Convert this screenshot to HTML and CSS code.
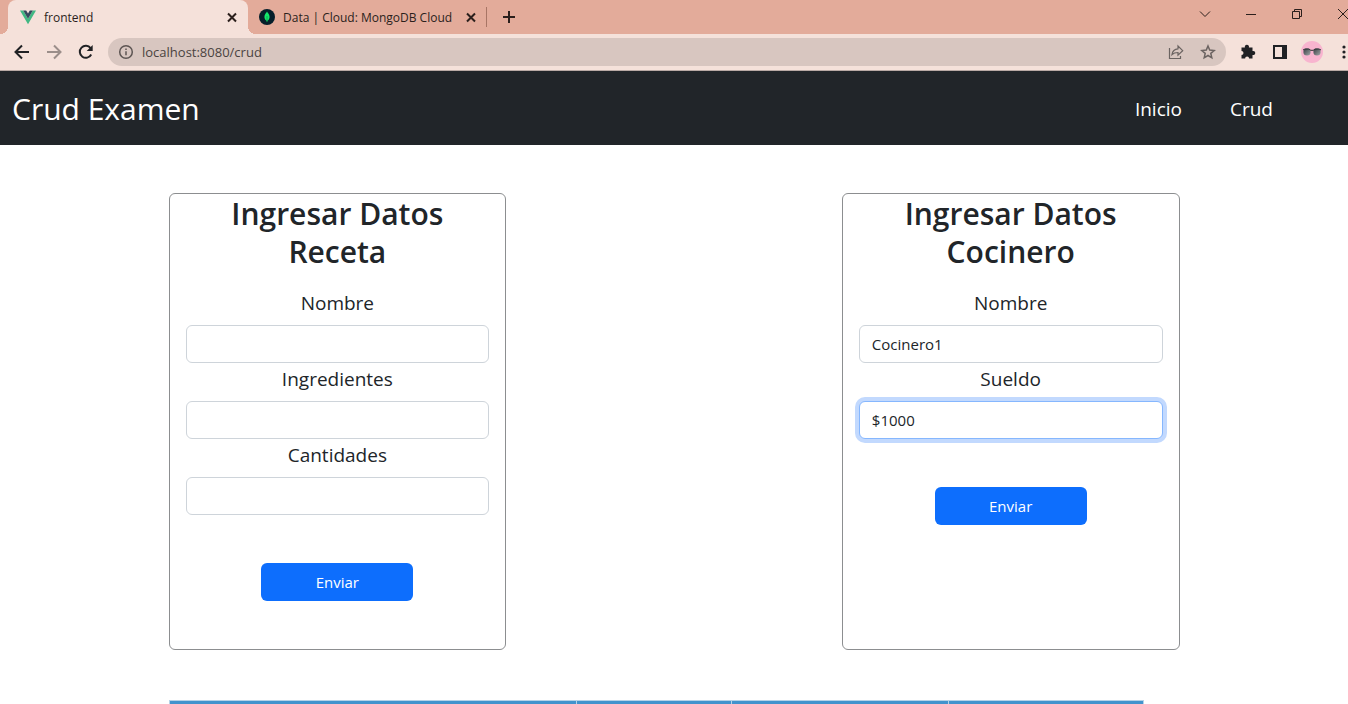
FILE: index.html
```html
<!DOCTYPE html>
<html lang="es">
<head>
<meta charset="utf-8">
<meta name="viewport" content="width=device-width, initial-scale=1">
<title>frontend</title>
<link rel="stylesheet" href="styles.css">
</head>
<body>
<div class="browser">
  <header class="tab-strip">
    <div class="tab tab-active">
      <svg class="favicon" viewBox="0 0 16 16"><path fill="#41b883" d="M0 1.5h3.2L8 9.7l4.8-8.2H16L8 15.2z"/><path fill="#35495e" d="M3.2 1.5h3L8 4.6l1.8-3.1h3L8 9.7z"/></svg>
      <span class="tab-title">frontend</span>
      <button class="tab-close" aria-label="Cerrar frontend"><svg viewBox="0 0 16 16"><path d="M4 4.5l8 8M12 4.5l-8 8"/></svg></button>
    </div>
    <div class="tab tab-idle">
      <svg class="favicon" viewBox="0 0 16 16"><circle cx="8" cy="8" r="8" fill="#061e2a"/><path fill="#13e66b" d="M8 2.6c.8 1.6 2.6 2.8 2.6 5.5 0 2-1.2 3.2-2.3 4L8 13.6l-.3-1.5c-1.1-.8-2.3-2-2.3-4C5.4 5.4 7.2 4.2 8 2.6z"/><path stroke="#0a8f48" stroke-width=".7" d="M8 7v6"/></svg>
      <span class="tab-title">Data | Cloud: MongoDB Cloud</span>
      <button class="tab-close" aria-label="Cerrar MongoDB"><svg viewBox="0 0 16 16"><path d="M4 4.5l8 8M12 4.5l-8 8"/></svg></button>
    </div>
    <button class="new-tab" aria-label="Nueva pestaña"><svg viewBox="0 0 16 16"><path d="M8 2v12M2 8h12"/></svg></button>
    <div class="window-controls">
      <button aria-label="Buscar pestañas"><svg viewBox="0 0 16 16"><path d="M3 5.5l5 5 5-5"/></svg></button>
      <button aria-label="Minimizar"><svg viewBox="0 0 16 16"><path d="M3 8.5h10"/></svg></button>
      <button aria-label="Restaurar"><svg viewBox="0 0 16 16"><path d="M3.5 5.5h7v7h-7zM5.5 5.5v-2h7v7h-2"/></svg></button>
      <button aria-label="Cerrar"><svg viewBox="0 0 16 16"><path d="M3 3l10 10M13 3L3 13"/></svg></button>
    </div>
  </header>

  <div class="toolbar">
    <button class="tool" aria-label="Atrás"><svg viewBox="0 0 16 16"><path d="M15 8H2M8 1.500L1.500 8 8 14.500"/></svg></button>
    <button class="tool tool-off" aria-label="Adelante"><svg viewBox="0 0 16 16"><path d="M1 8h13M8 1.500L14.500 8 8 14.500"/></svg></button>
    <button class="tool" aria-label="Recargar"><svg viewBox="0 0 16 16"><path d="M13.200 10.500A6 6 0 1 1 12.600 4.200"/><path class="solid" d="M14.700 1v6H8.700z"/></svg></button>
    <div class="omnibox">
      <svg class="info" viewBox="0 0 16 16"><circle cx="8" cy="8" r="6.300"/><path d="M8 7.200v4.100M8 4.400v1.500"/></svg>
      <input class="address" type="text" aria-label="Dirección" value="localhost:8080/crud">
      <button class="tool tool-soft" aria-label="Compartir"><svg viewBox="0 0 16 16"><path d="M1.500 4v10.500h11V12M4 10.500c.5-3.500 2.500-5.500 6-5.700V2l4.700 4.700L10 11.200V8.500c-2.700 0-4.500.5-6 2z"/></svg></button>
      <button class="tool tool-soft tool-star" aria-label="Favorito"><svg viewBox="0 0 16 16"><path d="M8 2l1.700 4.100 4.500.4-3.400 2.900 1 4.400L8 11.500l-3.800 2.300 1-4.400-3.400-2.900 4.500-.4z"/></svg></button>
    </div>
    <button class="tool" aria-label="Extensiones"><svg viewBox="0 0 16 16"><path class="solid" d="M1.500 3.500h3.400a2.100 2.100 0 1 1 4 0h3.600V7a2.100 2.100 0 1 1 0 4v3.500H9.100a2 2 0 0 0-4 0H1.500v-3.600a2 2 0 0 0 0-4z"/></svg></button>
    <button class="tool" aria-label="Panel lateral"><svg viewBox="0 0 16 16"><path d="M2 2h12v12H2z"/><path class="solid" d="M10 2h4v12h-4z"/></svg></button>
    <button class="tool" aria-label="Perfil"><svg class="avatar" viewBox="0 0 22 22"><defs><linearGradient id="lens" x2="1" y2="1"><stop stop-color="#333b3f"/><stop offset="1" stop-color="#a5a8aa"/></linearGradient></defs><circle class="face" cx="11" cy="11" r="11"/><circle class="lens" cx="6" cy="11" r="3.600"/><circle class="lens" cx="16" cy="11" r="3.600"/><path class="frame" d="M2 9l2-1h4l2 1.500q1-.8 2 0L14 8h4l2 1"/></svg></button>
    <button class="tool" aria-label="Menú"><svg viewBox="0 0 16 16"><circle class="solid" cx="8" cy="3" r="1.600"/><circle class="solid" cx="8" cy="8" r="1.600"/><circle class="solid" cx="8" cy="13" r="1.600"/></svg></button>
  </div>

  <div class="page">
    <nav class="navbar">
      <a class="brand" href="#">Crud Examen</a>
      <div class="nav-links">
        <a href="#">Inicio</a>
        <a href="#">Crud</a>
      </div>
    </nav>
    <main class="content">
      <div class="cards">
        <form class="card">
          <h2>Ingresar Datos Receta</h2>
          <label for="receta-nombre">Nombre</label>
          <input class="field" id="receta-nombre" type="text">
          <label for="receta-ingredientes">Ingredientes</label>
          <input class="field" id="receta-ingredientes" type="text">
          <label for="receta-cantidades">Cantidades</label>
          <input class="field" id="receta-cantidades" type="text">
          <button class="submit" type="button">Enviar</button>
        </form>
        <form class="card">
          <h2>Ingresar Datos Cocinero</h2>
          <label for="cocinero-nombre">Nombre</label>
          <input class="field" id="cocinero-nombre" type="text" value="Cocinero1">
          <label for="cocinero-sueldo">Sueldo</label>
          <input class="field field-focus" id="cocinero-sueldo" type="text" value="$1000">
          <button class="submit" type="button">Enviar</button>
        </form>
      </div>
      <table class="records">
        <colgroup><col class="col-a"><col class="col-b"><col class="col-c"><col class="col-d"></colgroup>
        <thead><tr><th></th><th></th><th></th><th></th></tr></thead>
      </table>
    </main>
  </div>
</div>
</body>
</html>
```

FILE: styles.css
```css
* { box-sizing: border-box; }

body {
  margin: 0;
  font-family: "Open Sans", "Noto Sans", sans-serif;
  color: #212529;
  background: #fff;
}

button {
  padding: 0;
  border: 0;
  background: none;
  color: inherit;
  font: inherit;
}

svg {
  display: block;
  width: 16px;
  height: 16px;
  fill: none;
  stroke: none;
}

button svg { stroke: currentColor; }

.browser {
  display: flex;
  flex-direction: column;
  height: 100vh;
  overflow: hidden;
}

/* Tabs */
.tab-strip {
  display: flex;
  flex: none;
  height: 34px;
  padding-left: 8px;
  background: #e3ab9a;
  color: #2b1f1c;
  font-size: 12px;
}

.tab {
  display: flex;
  align-items: center;
  gap: 8px;
  width: 240px;
  padding: 0 8px 0 12px;
}

.tab-active {
  position: relative;
  border-radius: 8px 8px 0 0;
  background: #f5e1da;
}

.tab-active::before,
.tab-active::after {
  content: "";
  position: absolute;
  bottom: 0;
  width: 8px;
  height: 8px;
}

.tab-active::before {
  right: 100%;
  background: radial-gradient(circle at 0 0, transparent 8px, #f5e1da 8px);
}

.tab-active::after {
  left: 100%;
  background: radial-gradient(circle at 100% 0, transparent 8px, #f5e1da 8px);
}

.tab-idle {
  width: 238px;
  padding: 0 7px 0 11px;
}

.tab-title {
  flex: 1;
  white-space: nowrap;
}

.tab-close svg { stroke-width: 2; }

.new-tab {
  padding: 0 14px;
  border-left: 1px solid #a87565;
  align-self: center;
  height: 20px;
}

.new-tab svg { stroke-width: 2; }

.window-controls {
  display: flex;
  margin: 0 -18px 0 auto;
  padding-bottom: 6px;
}

.window-controls button {
  display: grid;
  place-items: center;
  width: 46px;
}

/* Toolbar */
.toolbar {
  display: flex;
  flex: none;
  align-items: center;
  height: 37px;
  margin-right: -12px;
  padding-left: 6px;
  border-bottom: 1px solid #b9aaa5;
  background: #f5e1da;
  color: #202124;
}

.tool {
  display: grid;
  flex: none;
  place-items: center;
  width: 32px;
  height: 28px;
}

.tool svg { stroke-width: 2; }
.tool-off { color: #9b8e8a; }
.tool-soft { color: #6b6361; }
.tool-soft svg { stroke-width: 1.2; }
.tool-star svg { stroke-width: 1.5; }
.tool .solid { fill: currentColor; stroke: none; }

.omnibox {
  display: flex;
  flex: 1;
  align-items: center;
  height: 28px;
  margin: 0 6px;
  padding: 0 2px 0 10px;
  border-radius: 14px;
  background: #d8c6c0;
}

.info {
  stroke: #5d5553;
  stroke-width: 1.5;
}

.address {
  flex: 1;
  min-width: 0;
  padding: 0 8px;
  border: 0;
  outline: 0;
  background: none;
  color: #4a4341;
  font: 13px/20px "Open Sans", "Noto Sans", sans-serif;
}

.tool .avatar {
  width: 22px;
  height: 22px;
  stroke: none;
}

.face { fill: #f8b4cf; }
.lens { fill: url(#lens); }
.frame { stroke: #2d3335; stroke-width: 1; }

/* Page */
.page {
  flex: 1;
  min-height: 0;
  overflow: hidden;
}

.navbar {
  display: flex;
  align-items: center;
  justify-content: space-between;
  padding: 16px 75px 14px 12px;
  background: #212529;
}

.navbar a {
  color: #fff;
  text-decoration: none;
}

.brand {
  font-size: 30px;
  line-height: 44px;
}

.nav-links {
  display: flex;
  gap: 48px;
  font-size: 19px;
}

.content { padding: 48px 12.5% 0; }

.cards {
  display: flex;
  justify-content: space-between;
}

.card {
  display: flex;
  flex-direction: column;
  width: 33.4%;
  padding: 1px 16px 48px;
  border: 1px solid #8c8e90;
  border-radius: 6px;
  text-align: center;
}

.card h2 {
  margin: 0 0 16px;
  font-size: 30px;
  font-weight: 600;
  line-height: 38px;
}

.card label {
  margin-bottom: 6px;
  font-size: 19px;
  line-height: 32px;
}

.field {
  width: 100%;
  height: 38px;
  padding: 6px 12px;
  border: 1px solid #ced4da;
  border-radius: 6px;
  outline: 0;
  background: #fff;
  color: #212529;
  font: 15px/24px "Open Sans", "Noto Sans", sans-serif;
}

.field-focus {
  border-color: #86b7fe;
  box-shadow: 0 0 0 4px #c2d9fe;
}

.submit {
  align-self: center;
  width: 50%;
  height: 38px;
  margin-top: 48px;
  border-radius: 6px;
  background: #0d6efd;
  color: #fff;
  font-size: 15px;
}

.records {
  width: 96.5%;
  margin-top: 50px;
  border-collapse: collapse;
  table-layout: fixed;
}

.records th {
  height: 40px;
  border: 1px solid #b5d3e8;
  background: #4293cd;
}

.col-a { width: 41.8%; }
.col-b { width: 15.9%; }
.col-c { width: 22.3%; }
.col-d { width: 20%; }
```
